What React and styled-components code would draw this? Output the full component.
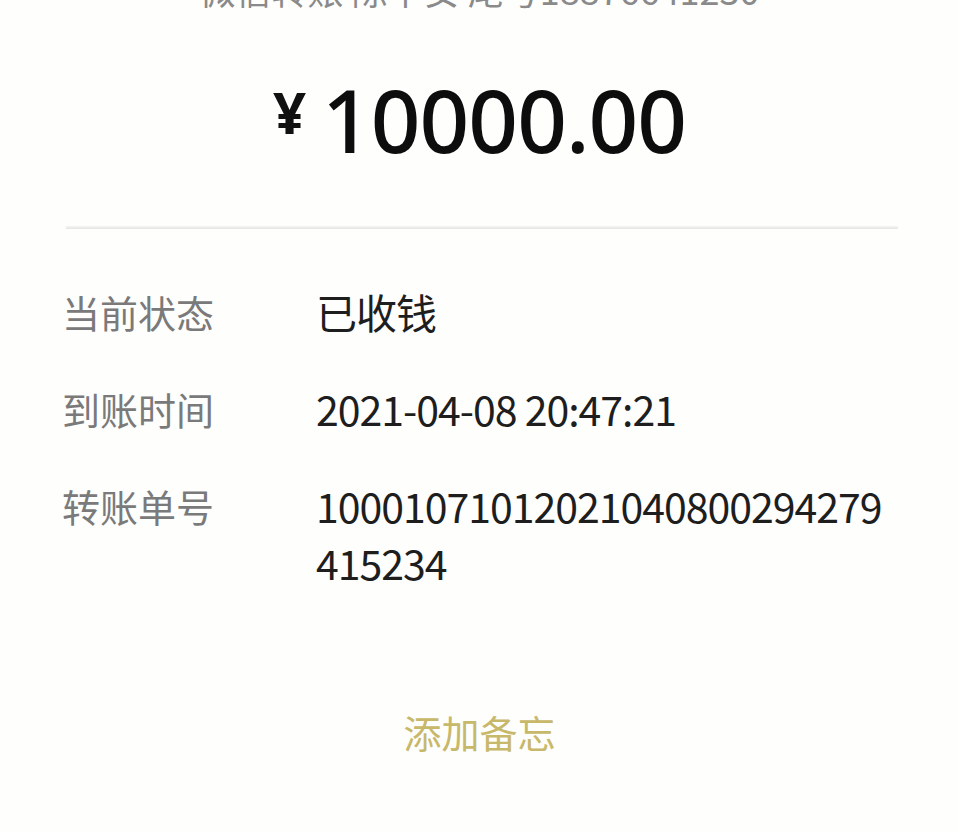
import styled, { createGlobalStyle } from 'styled-components';

const GlobalStyle = createGlobalStyle`
    html, body {
        margin : 0;
        padding : 0;
        background : #fefefd;
    }
    body {
        font-family : "Noto Sans CJK SC", "Noto Sans", sans-serif;
    }
`;

const rows = [
    { label : '当前状态', value : '已收钱' },
    { label : '到账时间', value : '2021-04-08 20:47:21' },
    { label : '转账单号', value : '10001071012021040800294279415234' },
];

function App() {
    return (
        <Page>
            <GlobalStyle />
            <Payee>微信转账 陈平安 尾号18876641230</Payee>
            <AmountRow>
                <Yen>¥</Yen>
                <Amount>10000.00</Amount>
            </AmountRow>
            <Divider />
            <InfoList>
                {rows.map((row) => (
                    <InfoRow key={row.label}>
                        <Label>{row.label}</Label>
                        <Value>{row.value}</Value>
                    </InfoRow>
                ))}
            </InfoList>
            <NoteLink>添加备忘</NoteLink>
        </Page>
    );
}

export default App;

const Page = styled.div`
    display : flex;
    flex-direction : column;
    align-items : stretch;
    width : 959px;
    height : 832px;
    overflow : hidden;
    background : #fefefd;
`;

const Payee = styled.div`
    margin-top : -31px;
    text-align : center;
    font-size : 36px;
    line-height : 40px;
    color : #8a8a8a;
`;

const AmountRow = styled.div`
    display : flex;
    justify-content : center;
    align-items : flex-start;
    gap : 16px;
    margin-top : 65px;
`;

const Yen = styled.span`
    margin-top : 9px;
    font-family : "Noto Sans", sans-serif;
    font-size : 58px;
    line-height : 58px;
    font-weight : 700;
    color : #111;
`;

const Amount = styled.span`
    font-family : "Noto Sans", sans-serif;
    font-size : 87px;
    line-height : 90px;
    font-weight : 500;
    letter-spacing : -1px;
    color : #0d0d0d;
`;

const Divider = styled.div`
    margin : 62px 61px 0 66px;
    height : 3px;
    background : linear-gradient(#f6f6f5, #e4e4e4);
`;

const InfoList = styled.div`
    display : flex;
    flex-direction : column;
    gap : 40px;
    margin-top : 54px;
    padding : 0 68px 0 62px;
`;

const InfoRow = styled.div`
    display : grid;
    grid-template-columns : 254px 1fr;
    align-items : start;
`;

const Label = styled.span`
    font-size : 38px;
    line-height : 57px;
    color : #7a7a7a;
`;

const Value = styled.span`
    font-size : 41px;
    line-height : 57px;
    letter-spacing : -1px;
    color : #1e1e1e;
    word-break : break-all;
`;

const NoteLink = styled.div`
    margin-top : 112px;
    text-align : center;
    font-size : 38px;
    line-height : 57px;
    color : #c8b86a;
`;
